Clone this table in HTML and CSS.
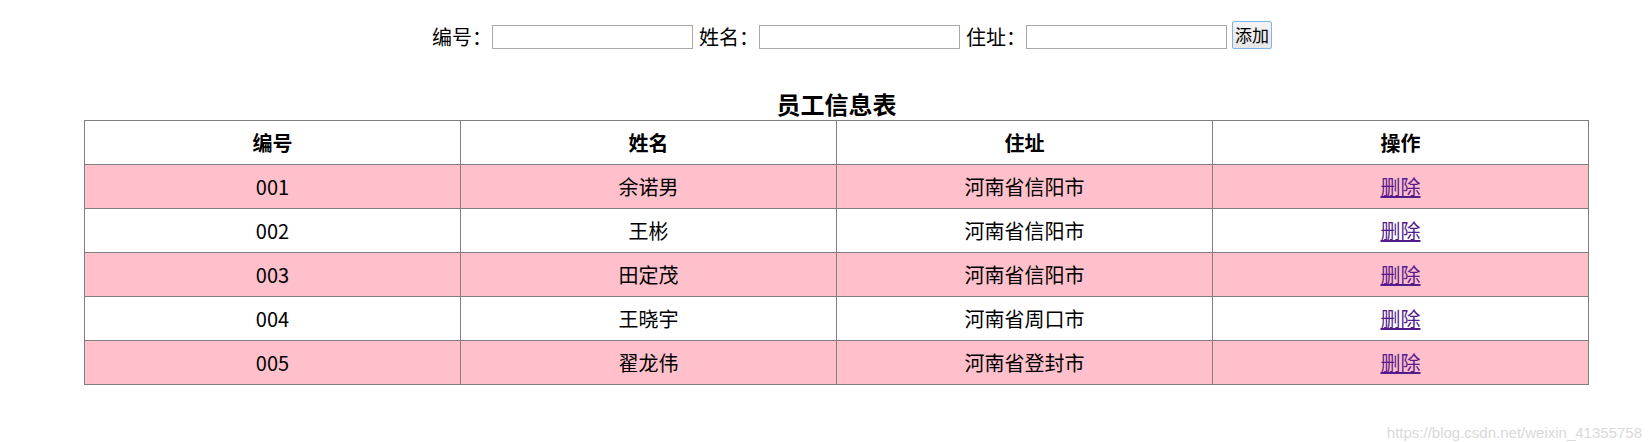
FILE: index.html
```html
<!DOCTYPE html>
<html lang="zh-CN">
<head>
<meta charset="utf-8">
<title>员工信息表</title>
<link rel="stylesheet" href="styles.css">
</head>
<body>
<div class="page">
  <form class="add-form">
    <label class="lbl">编号：</label><input class="field" type="text">
    <label class="lbl gap">姓名：</label><input class="field" type="text">
    <label class="lbl gap">住址：</label><input class="field" type="text">
    <button class="add-btn" type="button">添加</button>
  </form>
  <table class="staff">
    <caption class="title">员工信息表</caption>
    <colgroup><col><col><col><col></colgroup>
    <thead>
      <tr><th>编号</th><th>姓名</th><th>住址</th><th>操作</th></tr>
    </thead>
    <tbody>
      <tr class="odd"><td>001</td><td>余诺男</td><td>河南省信阳市</td><td><a class="del" href="#">删除</a></td></tr>
      <tr><td>002</td><td>王彬</td><td>河南省信阳市</td><td><a class="del" href="#">删除</a></td></tr>
      <tr class="odd"><td>003</td><td>田定茂</td><td>河南省信阳市</td><td><a class="del" href="#">删除</a></td></tr>
      <tr><td>004</td><td>王晓宇</td><td>河南省周口市</td><td><a class="del" href="#">删除</a></td></tr>
      <tr class="odd"><td>005</td><td>翟龙伟</td><td>河南省登封市</td><td><a class="del" href="#">删除</a></td></tr>
    </tbody>
  </table>
  <div class="watermark">https://blog.csdn.net/weixin_41355758</div>
</div>
</body>
</html>
```
FILE: styles.css
```css
html, body {
  margin: 0;
  padding: 0;
  background: #fff;
}
body {
  font-family: "Noto Sans CJK SC", "Open Sans", sans-serif;
  font-size: 20px;
  color: #000;
}
.page {
  position: relative;
  width: 1651px;
  height: 442px;
  overflow: hidden;
}
.add-form {
  display: flex;
  align-items: flex-end;
  margin: 0;
  padding: 21px 0 0 432px;
  height: 28px;
}
.lbl {
  display: block;
  height: 24px;
  line-height: 24px;
  font-size: 20px;
  white-space: nowrap;
}
.lbl.gap {
  margin-left: 6px;
}
.field {
  box-sizing: border-box;
  width: 201px;
  height: 24px;
  margin: 0;
  padding: 1px 2px;
  border: 1px solid #a9a9a9;
  background: #fff;
  font-size: 16px;
}
.add-btn {
  box-sizing: border-box;
  width: 40px;
  height: 28px;
  margin: 0 0 0 5px;
  padding: 0;
  border: 1px solid #7eb4ea;
  border-radius: 2px;
  background: linear-gradient(#f4f4f4, #e6e6e6);
  font-family: "Noto Sans CJK SC", sans-serif;
  font-size: 17px;
  line-height: 26px;
  color: #000;
}
.staff {
  margin: 39px 0 0 84px;
  width: 1505px;
  table-layout: fixed;
  border-collapse: collapse;
}
.title {
  height: 32px;
  line-height: 32px;
  font-size: 24px;
  font-weight: bold;
  text-align: center;
}
.staff th,
.staff td {
  height: 43px;
  padding: 0;
  border: 1px solid #808080;
  text-align: center;
  vertical-align: middle;
  line-height: 24px;
  font-size: 20px;
}
.staff th {
  font-weight: bold;
}
.staff tr.odd td {
  background: #ffc0cb;
}
.del {
  color: #551a8b;
  text-decoration: underline;
}
.watermark {
  position: absolute;
  right: 9px;
  top: 424px;
  font-family: "Liberation Sans", Arial, sans-serif;
  font-size: 15px;
  line-height: 18px;
  color: #d9d9d9;
  white-space: nowrap;
}
```
